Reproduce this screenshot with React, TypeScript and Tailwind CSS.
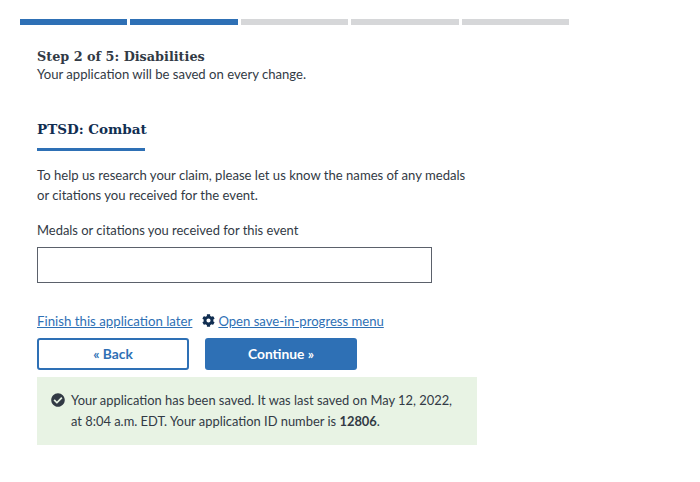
import { FaCog, FaCheckCircle } from "react-icons/fa";

const sans = "font-['Lato','Noto_Sans',sans-serif]";
const serif = "font-['DejaVu_Serif',serif]";

const steps = [true, true, false, false, false];

export default function App() {
  return (
    <div className={`${sans} h-[482px] w-[700px] bg-white pt-[19px] text-[13.1px] text-[#323a45]`}>
      <div className="ml-5 flex w-[549px] gap-[3px]">
        {steps.map((done, i) => (
          <div
            key={i}
            className={`h-[5.5px] flex-1 ${done ? "bg-[#2e70b5]" : "bg-[#d6d7d9]"}`}
          />
        ))}
      </div>

      <div className="ml-[37px] mt-[22px]">
        <h2 className={`${serif} text-[12.8px] leading-[19px] font-bold text-[#323a45]`}>
          Step 2 of 5: Disabilities
        </h2>
        <p className="leading-[18px] -mt-[1px]">Your application will be saved on every change.</p>

        <h3 className={`${serif} mt-[35px] text-[13.5px] leading-[22px] font-bold text-[#112e51]`}>
          PTSD: Combat
        </h3>
        <div className="mt-[8px] h-[3px] w-[108px] bg-[#2e70b5]" />

        <p className="mt-[14px] w-[440px] leading-[20px]">
          To help us research your claim, please let us know the names of any medals or citations
          you received for the event.
        </p>

        <p className="mt-[14px] text-[12.95px] leading-[23px]">
          Medals or citations you received for this event
        </p>
        <input
          type="text"
          className="mt-[5px] block h-9 w-[395px] border border-[#5b616b] bg-white"
        />

        <div className="mt-[28px] flex items-center leading-[20px] text-[#2e70b5]">
          <a href="#" className="text-[13.25px] underline">
            Finish this application later
          </a>
          <a href="#" className="ml-[10px] flex items-center underline">
            <FaCog className="mr-[3px] h-[13px] w-[13px] text-[#112e51]" />
            Open save-in-progress menu
          </a>
        </div>

        <div className="mt-[7px] flex gap-4">
          <button className="h-8 w-[152px] rounded-[3px] border-2 border-[#2e70b5] bg-white pt-[2px] text-[13.8px] font-bold text-[#2e70b5]">
            « Back
          </button>
          <button className="h-8 w-[152px] rounded-[3px] bg-[#2e70b5] pt-[2px] text-[13.8px] font-bold text-white">
            Continue »
          </button>
        </div>

        <div className="mt-[7px] flex h-[68px] w-[440px] bg-[#e8f3e4] pt-[13px] pl-[14px]">
          <FaCheckCircle className="mt-[3px] h-[14px] w-[14px] shrink-0 text-[#323a45]" />
          <p className="ml-[6px] w-[390px] text-[12.9px] leading-[21px]">
            Your application has been saved. It was last saved on May 12, 2022, at 8:04 a.m. EDT.
            Your application ID number is <strong>12806</strong>.
          </p>
        </div>
      </div>
    </div>
  );
}
